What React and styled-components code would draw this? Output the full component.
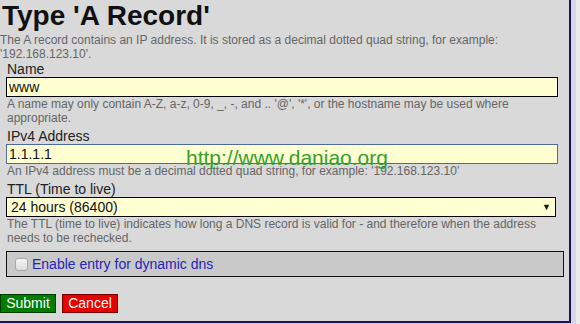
import React from 'react';
import styled, { createGlobalStyle } from 'styled-components';

const GlobalStyle = createGlobalStyle`
    html, body {
        margin: 0;
        padding: 0;
        background: #ececec;
    }
    body {
        font-family: "Liberation Sans", Arial, sans-serif;
    }
`;

const Frame = styled.div`
    width: 571px;
    padding: 0 5px 3px 0;
    background: #d6d6ea;
`;

const Panel = styled.div`
    position: relative;
    width: 569px;
    height: 321px;
    background: #d9d9d9;
    border-right: 2px solid #14145a;
    border-bottom: 2px solid #14145a;
    overflow: hidden;
`;

const Title = styled.h1`
    margin: 0;
    padding-left: 2px;
    font-size: 28px;
    line-height: 32px;
    font-weight: 700;
    color: #111;
`;

const Description = styled.p`
    margin: 1px 0 0;
    font-size: 12px;
    line-height: 14px;
    color: #666;
`;

const Field = styled.div`
    display: flex;
    flex-direction: column;
    width: 552px;
    margin-left: 6px;
    padding-top: ${p => p.gap || 0}px;
`;

const Label = styled.label`
    padding-left: 1px;
    font-size: 14px;
    line-height: 16px;
    color: #222;
`;

const TextInput = styled.input`
    box-sizing: border-box;
    width: 552px;
    height: 20px;
    margin: 0;
    padding: 1px 2px;
    font-family: inherit;
    font-size: 14px;
    color: #111;
    background: #ffffd2;
    border: 1px solid ${p => p.focused ? '#4d6c98' : '#000'};
    border-radius: 0;
    outline: none;
`;

const Help = styled.div`
    padding-left: 1px;
    font-size: 12px;
    line-height: 14px;
    color: #666;
`;

const SelectWrap = styled.div`
    position: relative;
    width: 550px;
`;

const Select = styled.select`
    box-sizing: border-box;
    display: block;
    width: 550px;
    height: 20px;
    margin: 0;
    padding: 0 4px;
    font-family: inherit;
    font-size: 14px;
    color: #111;
    background: #ffffd2;
    border: 1px solid #000;
    border-radius: 0;
    appearance: none;
    outline: none;
`;

const Arrow = styled.span`
    position: absolute;
    right: 5px;
    top: 4px;
    font-size: 9px;
    line-height: 12px;
    color: #111;
    pointer-events: none;
`;

const CheckBox = styled.fieldset`
    box-sizing: border-box;
    display: flex;
    align-items: center;
    gap: 4px;
    width: 558px;
    height: 26px;
    margin: 6px 0 0 6px;
    padding: 0 0 0 8px;
    background: #c9c9c9;
    border: 1px solid #111;
`;

const Check = styled.input`
    box-sizing: border-box;
    width: 13px;
    height: 13px;
    margin: 1px 0 0;
    appearance: none;
    border: 1px solid #a8a8a8;
    border-radius: 3px;
    background: linear-gradient(#f6f6f6, #dcdcdc);
`;

const CheckLabel = styled.label`
    font-size: 14px;
    line-height: 16px;
    color: #2525b8;
`;

const Buttons = styled.div`
    display: flex;
    gap: 6px;
    margin-top: 17px;
`;

const Button = styled.button`
    box-sizing: border-box;
    width: 56px;
    height: 19px;
    margin: 0;
    padding: 0;
    font-family: inherit;
    font-size: 14px;
    line-height: 17px;
    color: #fff;
    background: ${p => p.danger ? '#e60000' : '#007c00'};
    border: 1px solid ${p => p.danger ? '#7a0000' : '#003c00'};
    border-radius: 0;
`;

const Watermark = styled.div`
    position: absolute;
    left: 186px;
    top: 146px;
    font-size: 21px;
    line-height: 24px;
    color: #35a02d;
    pointer-events: none;
`;

export default function App() {
    return (
        <>
            <GlobalStyle />
            <Frame>
                <Panel>
                    <Title>Type 'A Record'</Title>
                    <Description>
                        The A record contains an IP address. It is stored as a decimal dotted quad string, for example: '192.168.123.10'.
                    </Description>

                    <Field>
                        <Label>Name</Label>
                        <TextInput defaultValue="www" />
                        <Help>
                            A name may only contain A-Z, a-z, 0-9, _, -, and .. '@', '*', or the hostname may be used where appropriate.
                        </Help>
                    </Field>

                    <Field gap={3}>
                        <Label>IPv4 Address</Label>
                        <TextInput focused defaultValue="1.1.1.1" />
                        <Help>
                            An IPv4 address must be a decimal dotted quad string, for example: '192.168.123.10'
                        </Help>
                    </Field>

                    <Field gap={3}>
                        <Label>TTL (Time to live)</Label>
                        <SelectWrap>
                            <Select defaultValue="86400">
                                <option value="86400">24 hours (86400)</option>
                            </Select>
                            <Arrow>▼</Arrow>
                        </SelectWrap>
                        <Help>
                            The TTL (time to live) indicates how long a DNS record is valid for - and therefore when the address needs to be rechecked.
                        </Help>
                    </Field>

                    <CheckBox>
                        <Check type="checkbox" id="dyndns" />
                        <CheckLabel htmlFor="dyndns">Enable entry for dynamic dns</CheckLabel>
                    </CheckBox>

                    <Buttons>
                        <Button type="button">Submit</Button>
                        <Button type="button" danger>Cancel</Button>
                    </Buttons>

                    <Watermark>http://www.daniao.org</Watermark>
                </Panel>
            </Frame>
        </>
    );
}
